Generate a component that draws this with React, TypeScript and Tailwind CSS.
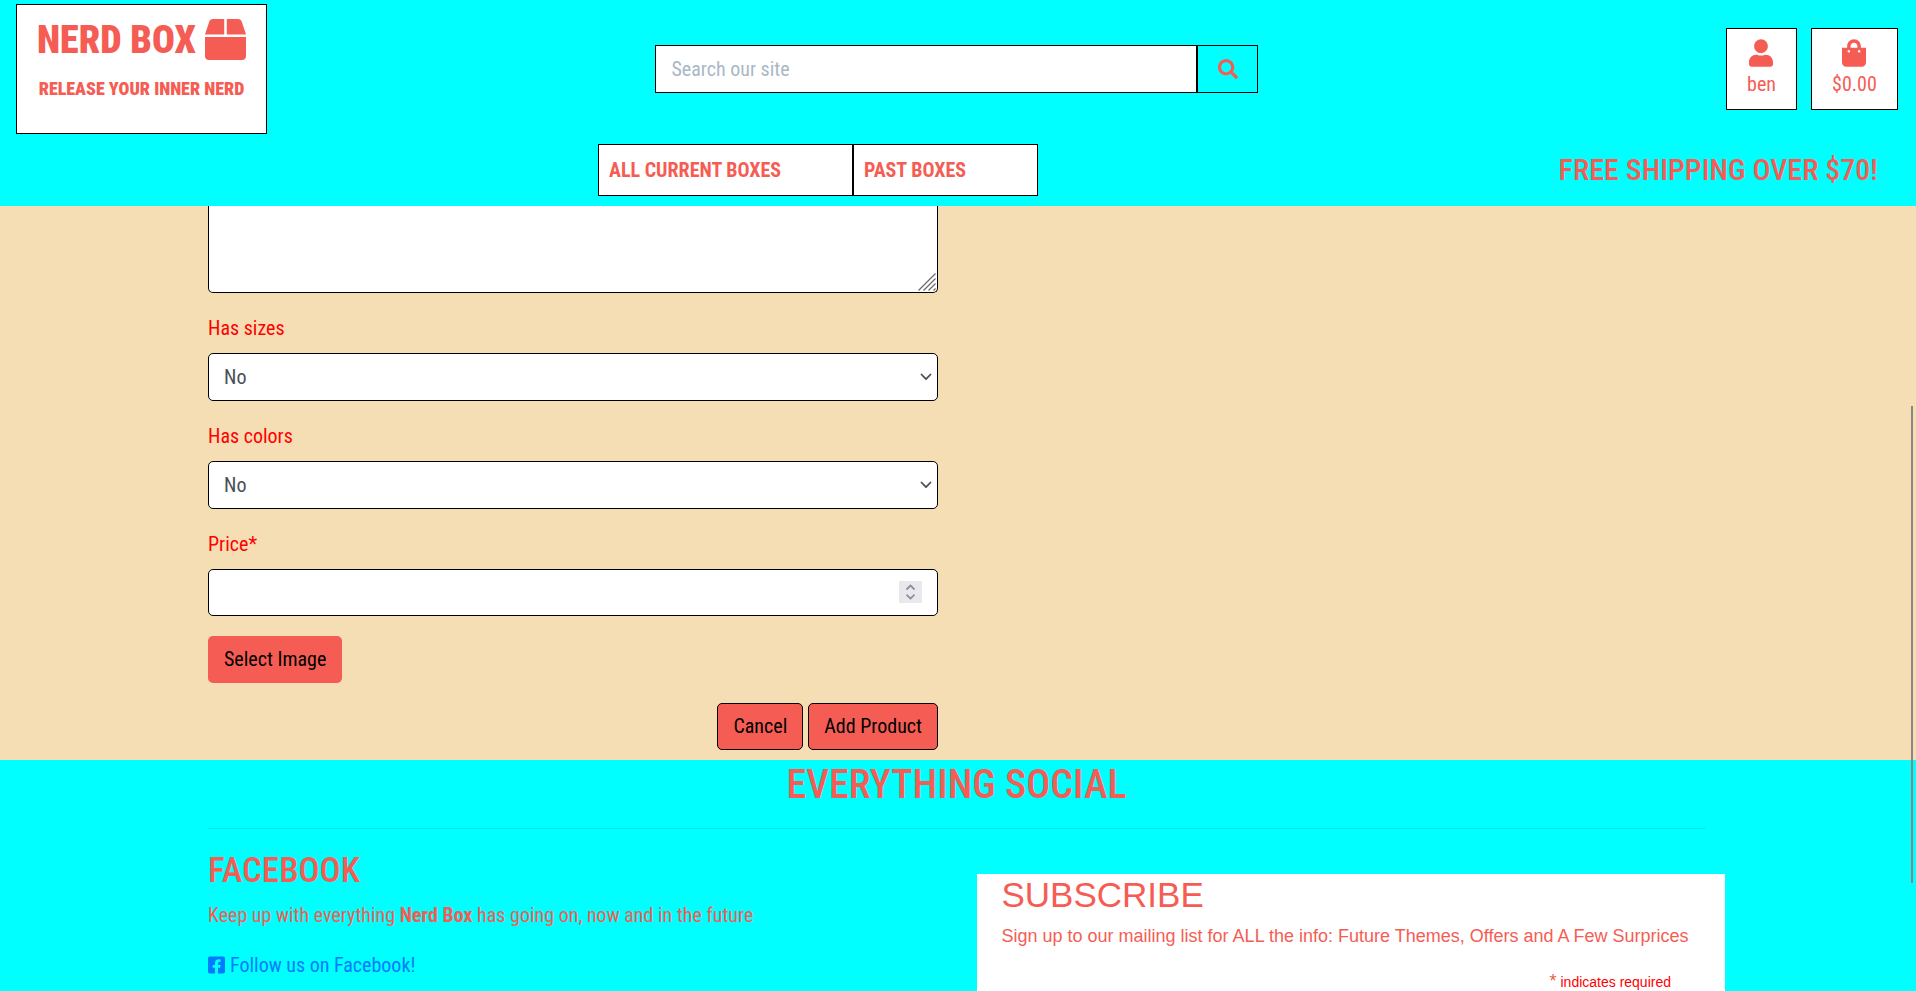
import React from "react";
import { FaSearch, FaUser, FaShoppingBag, FaFacebookSquare, FaBox } from "react-icons/fa";

function Chevron() {
  return (
    <svg className="pointer-events-none absolute top-1/2 right-1.5 h-2 w-3 -translate-y-1/2" viewBox="0 0 12 8" fill="none" stroke="#495057" strokeWidth="1.800" strokeLinecap="round" strokeLinejoin="round">
      <path d="M1.500 1.500 6 6.200l4.500-4.700" />
    </svg>
  );
}

function SelectField({ id, label }: { id: string; label: string }) {
  return (
    <div>
      <label htmlFor={id} className="mb-2.5 block text-[#ff0000]">{label}</label>
      <div className="relative">
        <select id={id} defaultValue="No" className="block h-12 w-full appearance-none rounded-[5px] border border-black bg-white px-[15px] text-[#495057]">
          <option>No</option>
          <option>Yes</option>
        </select>
        <Chevron />
      </div>
    </div>
  );
}

export default function App() {
  return (
    <div className="relative flex min-h-screen flex-col bg-[#f5deb3] font-['Roboto_Condensed','Liberation_Sans_Narrow',sans-serif] text-[20px] leading-[30px] text-[#f55d54]">
      <header className="bg-[#00ffff] pt-1 pr-[18px] pb-2.5 pl-4">
        <div className="grid grid-cols-3">
          <a href="#home" className="flex h-[130px] w-[251px] flex-col border border-black bg-white px-5 pt-3.5">
            <span className="flex items-center justify-between">
              <span className="text-[38px] leading-10 font-black">NERD BOX</span>
              <FaBox className="size-[41px]" />
            </span>
            <span className="mt-3.5 text-center text-[18px] leading-[30px] font-black whitespace-nowrap">RELEASE YOUR INNER NERD</span>
          </a>
          <form className="mt-[41px] flex h-12 justify-center px-3" onSubmit={(e) => e.preventDefault()}>
            <input type="text" aria-label="Search our site" placeholder="Search our site" className="h-12 w-[542px] border border-black bg-white px-[15px] placeholder:text-[#a9b8c6]" />
            <button type="submit" aria-label="Search" className="flex w-[61px] items-center justify-center border border-black">
              <FaSearch className="size-5" />
            </button>
          </form>
          <div className="mt-6 flex items-start justify-end gap-3.5">
            <a href="#account" className="flex h-[82px] w-[71px] flex-col items-center border border-black bg-white pt-2.5">
              <FaUser className="mb-0.5 h-7 w-6" />
              {"ben"}
            </a>
            <a href="#bag" className="flex h-[82px] w-[87px] flex-col items-center border border-black bg-white pt-2.5">
              <FaShoppingBag className="mb-0.5 h-7 w-6" />
              {"$0.00"}
            </a>
          </div>
        </div>
        <div className="mt-2.5 grid grid-cols-[582px_1fr_auto] items-center">
          <nav className="col-start-2 flex font-bold">
            <a href="#current" className="flex h-[52px] w-[255px] items-center border border-black bg-white px-2.5">ALL CURRENT BOXES</a>
            <a href="#past" className="flex h-[52px] w-[185px] items-center border border-black bg-white px-2.5">PAST BOXES</a>
          </nav>
          <h4 className="pr-5 text-[30px] font-medium">FREE SHIPPING OVER $70!</h4>
        </div>
      </header>

      <main className="px-[208px] pb-2.5">
        <form className="max-w-[730px]" onSubmit={(e) => e.preventDefault()}>
          <div className="relative">
            <textarea aria-label="Description" className="block h-[87px] w-full resize-none rounded-b-[5px] border border-t-0 border-black bg-white px-[15px] text-[#495057]" />
            <svg className="pointer-events-none absolute right-0.5 bottom-0.5 size-[18px]" viewBox="0 0 18 18" stroke="#6b6b6b" strokeWidth="1.300">
              <path d="M.5 17.500 17.500.5M5.500 17.500l12-12M10.500 17.500l7-7M15.500 17.500l2-2" />
            </svg>
          </div>
          <div className="mt-5 flex flex-col gap-5">
            <SelectField id="sizes" label="Has sizes" />
            <SelectField id="colors" label="Has colors" />
            <div>
              <label htmlFor="price" className="mb-2.5 block text-[#ff0000]">Price*</label>
              <div className="relative">
                <input id="price" type="number" className="block h-[47px] w-full [appearance:textfield] rounded-[5px] border border-black bg-white px-[15px] text-[#495057]" />
                <svg className="pointer-events-none absolute top-3 right-4 h-[22px] w-[23px]" viewBox="0 0 23 22" fill="none" stroke="#8f8f9d" strokeWidth="1.800" strokeLinecap="round" strokeLinejoin="round">
                  <path fill="#e9e9ed" stroke="none" d="M0 0h23v22H0z" />
                  <path d="m8 8 3.500-3.500L15 8M8 14.200l3.500 3.500 3.500-3.500" />
                </svg>
              </div>
            </div>
          </div>
          <button type="button" className="mt-5 block h-[47px] rounded-[5px] bg-[#f55d54] px-4 pb-0.5 text-black">Select Image</button>
          <div className="mt-5 flex justify-end gap-[5px]">
            <button type="button" className="h-[47px] rounded-[5px] border border-black bg-[#f55d54] px-[15px] pb-0.5 text-black">Cancel</button>
            <button type="submit" className="h-[47px] rounded-[5px] border border-black bg-[#f55d54] px-[15px] pb-0.5 text-black">Add Product</button>
          </div>
        </form>
      </main>

      <footer className="flex flex-1 flex-col bg-[#00ffff] pr-[211px] pl-[208px]">
        <h2 className="text-center text-[40px] leading-[50px] font-medium">EVERYTHING SOCIAL</h2>
        <hr className="mt-[18px] border-[#00e6e6]" />
        <div className="grid flex-1 grid-cols-2">
          <section className="pt-[21px]">
            <h3 className="text-[35px] leading-[42px] font-medium">FACEBOOK</h3>
            <p className="mt-2">
              Keep up with everything <strong>Nerd Box</strong> has going on, now and in the future
            </p>
            <a href="#facebook" className="mt-5 flex items-center gap-[5px] text-[#007bff]">
              <FaFacebookSquare className="h-5 w-[17px]" />
              Follow us on Facebook!
            </a>
          </section>
          <section className="mt-[45px] -mr-5 ml-5 bg-white pr-[54px] pl-[25px] font-['Liberation_Sans',sans-serif]">
            <h3 className="text-[35px] leading-[42px]">SUBSCRIBE</h3>
            <p className="mt-[5px] text-[18px] whitespace-nowrap">Sign up to our mailing list for ALL the info: Future Themes, Offers and A Few Surprices</p>
            <p className="mt-[18px] text-right text-[14px] leading-6 text-[#ff0000]">
              <span className="text-[18px] text-[#e85c41]">*</span> indicates required
            </p>
          </section>
        </div>
      </footer>

      <div aria-hidden="true" className="absolute top-[406px] right-[3px] h-[477px] w-0.5 bg-[#8c8585]" />
    </div>
  );
}
